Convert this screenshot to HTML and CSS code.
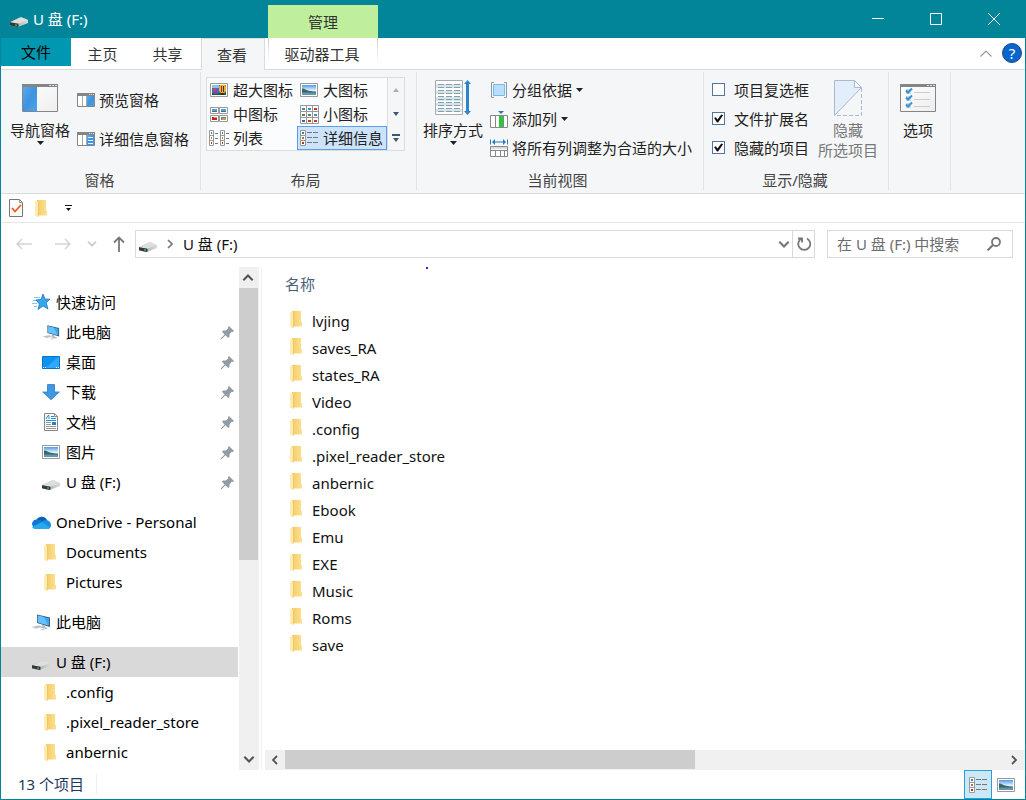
FILE: index.html
```html
<!DOCTYPE html>
<html lang="zh-CN">
<head>
<meta charset="utf-8">
<title>U 盘 (F:)</title>
<link rel="stylesheet" href="styles.css">
</head>
<body>
<svg class="sprite" aria-hidden="true">
  <defs>
    <linearGradient id="g-drive" x1="0" x2="1"><stop offset="0" stop-color="#9b9b9b"/><stop offset="1" stop-color="#d9dadb"/></linearGradient>
    <linearGradient id="g-folder" x1="0" x2="1"><stop offset="0" stop-color="#f0cd6b"/><stop offset="1" stop-color="#ffe08c"/></linearGradient>
    <linearGradient id="g-sky" x1="0" y1="0" x2="0" y2="1"><stop offset="0" stop-color="#4f9bea"/><stop offset=".55" stop-color="#e3f2fb"/><stop offset="1" stop-color="#a9cbe0"/></linearGradient>
    <linearGradient id="g-blue" x1="0" y1="0" x2="1" y2="1"><stop offset="0" stop-color="#58aaf0"/><stop offset=".5" stop-color="#3d93de"/><stop offset="1" stop-color="#4ba4ee"/></linearGradient>
    <linearGradient id="g-page" x1="0" y1="0" x2="1" y2="1"><stop offset="0" stop-color="#fff"/><stop offset="1" stop-color="#eee"/></linearGradient>
  </defs>
  <symbol id="drive" viewBox="0 0 18 10">
    <path d="M0 5.200L10 .6q1-.4 2 0l6 2.400v3L8.500 9.800H6L0 8.200z" fill="url(#g-drive)"/>
    <path d="M0 5.200L10 .6q1-.4 2 0l6 2.400-9.500 3.800z" fill="#dddee0"/>
    <path d="M0 5.200l8.500 1.600v2.700l-1 .4L0 8.200z" fill="#34373a"/>
    <path d="M5 7.200l2 .4v1.400l-2-.4z" fill="#36c13c"/>
  </symbol>
  <symbol id="folder" viewBox="0 0 12 17">
    <path d="M2 0h9v10.500l1 .8v4.200H2z" fill="url(#g-folder)"/>
    <path d="M0 .8L3.500 2v11.500L3 17 0 15.500z" fill="#ffeab0"/>
    <path d="M3.500 2v11.500L3 16.800" stroke="#e6be5c" stroke-width=".7" fill="none"/>
  </symbol>
  <symbol id="photo" viewBox="0 0 18 14">
    <path d="M.5.5h17v13H.5z" fill="#fff" stroke="#999" stroke-width="1"/>
    <path d="M2 2h14v10H2z" fill="url(#g-sky)"/>
    <path d="M2 5.500c3 0 4 2 7 2.200 2.500 0 4 .8 7 .8V10H2z" fill="#39685d"/>
    <path d="M2 9.500h14V12H2z" fill="#6395b5"/>
  </symbol>
  <symbol id="balloon" viewBox="0 0 18 14">
    <path d="M.5.5h17v13H.5z" fill="#fff" stroke="#999"/>
    <path d="M2 2h14v10H2z" fill="#2f74cf"/><path d="M2 2h7v3H2z" fill="#8cc0ef"/>
    <path d="M2 10h14v2H2z" fill="#24582d"/>
    <path d="M10 2h5l1 2v4l-2 2h-3L9 8V4z" fill="#f0b020"/><path d="M11 3h1v6h-1z" fill="#a32a20"/><path d="M13 3h1v6h-1z" fill="#453065"/>
    <path d="M3 5h3v3H3z" fill="#d83b52"/><path d="M4 8h4v3H4z" fill="#7a45b8"/><path d="M11 10h3v2h-3z" fill="#51220c"/>
  </symbol>
  <symbol id="tile-b" viewBox="0 0 9 7" preserveAspectRatio="none"><path d="M.5.5h8v6h-8z" fill="#fff" stroke="#999"/><path d="M2 2h5v2H2z" fill="#4f9fdc"/><path d="M2 4h5v1H2z" fill="#47776c"/></symbol>
  <symbol id="tile-r" viewBox="0 0 9 7" preserveAspectRatio="none"><path d="M.5.5h8v6h-8z" fill="#fff" stroke="#999"/><path d="M2 2h5v3H2z" fill="#c22418"/><path d="M4 2h3v1H4z" fill="#e9a22e"/></symbol>
  <symbol id="tile-y" viewBox="0 0 9 7" preserveAspectRatio="none"><path d="M.5.5h8v6h-8z" fill="#fff" stroke="#999"/><path d="M2 2h5v3H2z" fill="#567eb0"/><path d="M3 3h4v2H3z" fill="#d69831"/></symbol>
  <symbol id="medium" viewBox="0 0 18 15">
    <use href="#tile-b" x="0" y="0" width="9" height="7"/><use href="#tile-b" x="9" y="0" width="9" height="7"/>
    <use href="#tile-r" x="0" y="8" width="9" height="7"/><use href="#tile-y" x="9" y="8" width="9" height="7"/>
  </symbol>
  <symbol id="small" viewBox="0 0 19 19">
    <path d="M.5.5h18v18H.5zM6.500.5v18M12.500.5v18M.5 6.500h18M.5 12.500h18" fill="#fff" stroke="#999"/>
    <path d="M2 3h3v2H2zM8 3h3v2H8zM14 9h3v2h-3z" fill="#3f8fc2"/><path d="M14 3h3v2h-3zM8 15h3v2H8zM14 15h3v2h-3z" fill="#c53a22"/><path d="M2 9h3v2H2zM8 9h3v2H8z" fill="#56844b"/><path d="M2 15h3v2H2z" fill="#3e5fb4"/>
  </symbol>
  <symbol id="list" viewBox="0 0 20 17">
    <path d="M.5.500h4v15h-4zM.5 5.500h4M.5 10.500h4M11.500.500h4v15h-4zM11.500 5.500h4M11.500 10.500h4" fill="#fff" stroke="#999"/>
    <path d="M6 3.500h3M6 8.500h3M6 13.500h3M17 3.500h3M17 8.500h3M17 13.500h3" stroke="#777"/>
    <path d="M2 2h1v2H2zM13 2h1v2h-1z" fill="#3b849c"/><path d="M2 7h1v2H2zM13 7h1v2h-1z" fill="#b38b31"/><path d="M2 12h1v2H2zM13 12h1v2h-1z" fill="#b72c1b"/>
  </symbol>
  <symbol id="details" viewBox="0 0 18 16">
    <path d="M.5.500h5v15h-5zM.5 5.500h5M.5 10.500h5" fill="#fff" stroke="#999"/>
    <path d="M7 2.500h5m1 0h5M7 7.500h5m1 0h5M7 12.500h5m1 0h5" stroke="#777"/>
    <path d="M2 2h2v2H2z" fill="#3b849c"/><path d="M2 7h2v2H2z" fill="#957f54"/><path d="M2 12h2v2H2z" fill="#b72c1b"/>
  </symbol>
  <symbol id="caret" viewBox="0 0 7 4"><path d="M0 0h7L3.500 4z" fill="currentColor"/></symbol>
  <symbol id="pc" viewBox="0 0 20 17">
    <path d="M6 .5l13 3v9.500L6 9z" fill="#3d5c75"/><path d="M6.800 1.600L18 4.200v7.400L6.800 8.400z" fill="#36a8f4"/><path d="M6.800 1.600L13 3l4 8.200-10.200-2.800z" fill="#66c2ff"/>
    <path d="M11 10.800l3 1v1.500l3 .8-2 1-6-1.500 2-.8z" fill="#aeb8bf"/><path d="M0 13l8-1.800 5 1.400L5 15z" fill="#d5dade"/><path d="M2 13l6-1.200 3 .9-6 1.300z" fill="#b7c0c6"/><path d="M9 15.500l3-.7 2 .7-3 1z" fill="#c6cdd2"/>
  </symbol>
  <symbol id="pin" viewBox="0 0 13 13"><path d="M8 0l5 5-1.200 1-1-.2-2.200 2.400L8.400 11l-1.200 1-2.800-2.700L.8 13H0v-.8l3.600-3.700L1 5.800 2 4.600l2.900-.2 2.300-2.200L7 1z" fill="#919ca5"/></symbol>
  <symbol id="down" viewBox="0 0 10 6"><path d="M1 .7l4 4 4-4" fill="none" stroke="currentColor" stroke-width="1.800"/></symbol>
  <symbol id="frame" viewBox="0 0 36 28">
    <path d="M.5.500h35v27H.5z" fill="url(#g-page)" stroke="#858585"/><path d="M0 0h36v3H0z" fill="#858585"/><path d="M27 1h2v1h-2zM30 1h2v1h-2zM33 1h2v1h-2z" fill="#ddd"/>
  </symbol>
</svg>

<div class="window">
  <header class="titlebar">
    <svg class="drive title-drive"><use href="#drive"/></svg>
    <h1 class="title">U 盘 (F:)</h1>
    <div class="context-tab">管理</div>
    <div class="window-buttons">
      <button aria-label="最小化"><svg viewBox="0 0 12 12" width="12" height="12"><path d="M0 5.500h12" stroke="#fff"/></svg></button>
      <button aria-label="最大化"><svg viewBox="0 0 12 12" width="12" height="12"><path d="M.5.500h11v11H.5z" fill="none" stroke="#fff"/></svg></button>
      <button aria-label="关闭"><svg viewBox="0 0 12 12" width="12" height="12"><path d="M0 0l12 12M12 0L0 12" stroke="#fff"/></svg></button>
    </div>
  </header>

  <nav class="tabs">
    <button class="tab file">文件</button>
    <button class="tab">主页</button>
    <button class="tab">共享</button>
    <button class="tab active">查看</button>
    <button class="tab tools">驱动器工具</button>
    <div class="tab-tools">
      <button aria-label="折叠功能区"><svg viewBox="0 0 12 7" width="12" height="7"><path d="M.5 6.500L6 1l5.500 5.500" fill="none" stroke="#999" stroke-width="1.200"/></svg></button>
      <button class="help" aria-label="帮助">?</button>
    </div>
  </nav>

  <section class="ribbon">
    <div class="group panes">
      <div class="group-body">
        <button class="big">
          <span class="big-icon"><svg viewBox="0 0 36 28" width="36" height="28"><use href="#frame" width="36" height="28"/><path d="M1 3h14v24H1z" fill="url(#g-blue)"/></svg></span>
          <span>导航窗格</span><svg class="caret"><use href="#caret"/></svg>
        </button>
        <div class="pane-list">
          <button class="cmd"><svg viewBox="0 0 18 14" width="18" height="14"><path d="M.5.500h17v13H.5z" fill="#fff" stroke="#858585"/><path d="M0 0h18v3H0z" fill="#858585"/><path d="M12 1h1v1h-1zM14 1h1v1h-1zM16 1h1v1h-1z" fill="#ddd"/><path d="M5.500 3v10M9.500 3v10" stroke="#aaa"/><path d="M10 3h7v10h-7z" fill="url(#g-blue)"/></svg>预览窗格</button>
          <button class="cmd"><svg viewBox="0 0 18 14" width="18" height="14"><path d="M.5.500h17v13H.5z" fill="#fff" stroke="#858585"/><path d="M0 0h18v3H0z" fill="#858585"/><path d="M12 1h1v1h-1zM14 1h1v1h-1zM16 1h1v1h-1z" fill="#ddd"/><path d="M5.500 3v10M9.500 3v10" stroke="#aaa"/><path d="M10 3h7v10h-7z" fill="url(#g-blue)"/><path d="M11 5.500h5M11 8.500h5M11 11.500h5" stroke="#e3f3ff"/></svg>详细信息窗格</button>
        </div>
      </div>
      <div class="group-name">窗格</div>
    </div>

    <div class="group layout">
      <div class="group-body">
        <div class="gallery">
          <button><svg viewBox="0 0 18 14" width="18" height="14"><use href="#balloon"/></svg>超大图标</button>
          <button><svg viewBox="0 0 18 14" width="18" height="14"><use href="#photo"/></svg>大图标</button>
          <button><svg viewBox="0 0 18 15" width="18" height="15"><use href="#medium"/></svg>中图标</button>
          <button><svg viewBox="0 0 19 19" width="19" height="19"><use href="#small"/></svg>小图标</button>
          <button><svg viewBox="0 0 20 17" width="20" height="17"><use href="#list"/></svg>列表</button>
          <button class="selected"><svg viewBox="0 0 18 16" width="18" height="16"><use href="#details"/></svg>详细信息</button>
        </div>
        <div class="gallery-scroll">
          <button aria-label="上一行" disabled><svg viewBox="0 0 6 4" width="6" height="4"><path d="M0 4h6L3 0z" fill="#aab0ba"/></svg></button>
          <button aria-label="下一行"><svg viewBox="0 0 6 4" width="6" height="4"><path d="M0 0h6L3 4z" fill="#41536f"/></svg></button>
          <button aria-label="更多"><svg viewBox="0 0 8 8" width="8" height="8"><path d="M0 0h8v2H0zM1 4h6L4 8z" fill="#41536f"/></svg></button>
        </div>
      </div>
      <div class="group-name">布局</div>
    </div>

    <div class="group view">
      <div class="group-body">
        <button class="big">
          <span class="big-icon"><svg viewBox="0 0 36 36" width="36" height="36"><path d="M.5.500h27v34H.5z" fill="#fff" stroke="#aaa"/><path d="M1 4h26v4H1zM1 11h26v3H1zM1 17h26v4H1zM1 23h26v3H1zM1 29h26v3H1z" fill="#cbe8f5"/><path d="M3 4.500h6m2 0h6m2 0h6M3 7.500h6m2 0h6m2 0h6M3 10.500h6m2 0h6m2 0h6M3 13.500h6m2 0h6m2 0h6M3 16.500h6m2 0h6m2 0h6M3 19.500h6m2 0h6m2 0h6M3 22.500h6m2 0h6m2 0h6M3 25.500h6m2 0h6m2 0h6M3 28.500h6m2 0h6m2 0h6M3 31.500h6m2 0h6m2 0h6" stroke="#999"/><path d="M32.500 0L36 4h-2v27h2l-3.500 4-3.500-4h2V4h-2z" fill="#2b86cf"/></svg></span>
          <span>排序方式</span><svg class="caret"><use href="#caret"/></svg>
        </button>
        <div class="cmd-list">
          <button class="cmd"><svg viewBox="0 0 18 18" width="18" height="18"><path d="M4 1.500H1.500v15H4M14 1.500h2.500v15H14" fill="none" stroke="#8c98a3"/><path d="M3.500 3.500h11v11h-11z" fill="#b8dfff" stroke="#7ab8e7"/></svg>分组依据<svg class="caret"><use href="#caret"/></svg></button>
          <button class="cmd"><svg viewBox="0 0 18 18" width="18" height="18"><path d="M.5 5.500h17v12H.5zM5.500 5v12M9.500 5v12M13.500 5v12" fill="#fff" stroke="#888"/><path d="M9 6h4v11H9z" fill="#27c93b"/><path d="M8 1h6l-3 3z" fill="#2b78b8"/></svg>添加列<svg class="caret"><use href="#caret"/></svg></button>
          <button class="cmd"><svg viewBox="0 0 18 18" width="18" height="18"><path d="M.5.500v5M17.500.500v5" stroke="#2b78b8"/><path d="M2 3l3-3v2.500h8V0l3 3-3 3V3.500H5V6z" fill="#2b78b8"/><path d="M.5 7.500h17v10H.5zM5.500 11v6M10.500 11v6M14.500 11v6M0 11.500h18" fill="#fff" stroke="#888"/><path d="M1 8h16v2H1z" fill="#ddd"/></svg>将所有列调整为合适的大小</button>
        </div>
      </div>
      <div class="group-name">当前视图</div>
    </div>

    <div class="group show">
      <div class="group-body">
        <div class="cmd-list">
          <label class="check"><input type="checkbox">项目复选框</label>
          <label class="check"><input type="checkbox" checked>文件扩展名</label>
          <label class="check"><input type="checkbox" checked>隐藏的项目</label>
        </div>
        <button class="big" disabled>
          <span class="big-icon"><svg viewBox="0 0 28 36" width="28" height="36"><path d="M.5 35.500V.500h20l7 7z" fill="#e4eefb" stroke="#a9b9d2"/><path d="M20.500.500v7h7z" fill="#f7faff" stroke="#a9b9d2"/><path d="M27.500 8v27.500H1" fill="none" stroke="#a9b9d2" stroke-dasharray="4 2"/></svg></span>
          <span>隐藏<br>所选项目</span>
        </button>
      </div>
      <div class="group-name">显示/隐藏</div>
    </div>

    <div class="group options">
      <div class="group-body">
        <button class="big">
          <span class="big-icon"><svg viewBox="0 0 36 28" width="36" height="28"><use href="#frame" width="36" height="28"/><path d="M6 5h5v5H6zM6 12h5v5H6zM6 19h5v5H6z" fill="#d4d4d4"/><path d="M14 8.500h16M14 15.500h16M14 22.500h16" stroke="#ccc"/><path d="M6 6.500l2 2 4-4M6 13.500l2 2 4-4M6 20.500l2 2 4-4" fill="none" stroke="#2f93e0" stroke-width="2"/></svg></span>
          <span>选项</span>
        </button>
      </div>
    </div>
  </section>

  <div class="quick-bar">
    <button aria-label="属性"><svg viewBox="0 0 14 18" width="14" height="18"><path d="M.5.500h10l3 3v14H.5z" fill="#fafafa" stroke="#777"/><path d="M10.500.500v3h3" fill="none" stroke="#999"/><path d="M3 9l3 3.500L12 6" fill="none" stroke="#f15a1c" stroke-width="1.800"/></svg></button>
    <button aria-label="新建文件夹"><svg class="folder"><use href="#folder"/></svg></button>
    <button aria-label="自定义快速访问工具栏"><svg viewBox="0 0 7 6" width="7" height="6"><path d="M0 0h7v1H0zM1 3h5L3.500 6z" fill="#111"/></svg></button>
  </div>

  <div class="address-row">
    <div class="history">
      <button aria-label="后退" disabled><svg viewBox="0 0 16 12" width="16" height="12"><path d="M16 6H1M6 1L1 6l5 5" fill="none" stroke="#d4d4d4" stroke-width="1.500"/></svg></button>
      <button aria-label="前进" disabled><svg viewBox="0 0 16 12" width="16" height="12"><path d="M0 6h15M10 1l5 5-5 5" fill="none" stroke="#d4d4d4" stroke-width="1.500"/></svg></button>
      <button class="recent" aria-label="最近位置" disabled><svg class="chev"><use href="#down"/></svg></button>
      <button aria-label="上移"><svg viewBox="0 0 12 16" width="12" height="16"><path d="M6 16V1.500M1 6.500l5-5 5 5" fill="none" stroke="#777" stroke-width="1.800"/></svg></button>
    </div>
    <div class="address">
      <svg class="drive"><use href="#drive"/></svg>
      <svg viewBox="0 0 6 10" width="6" height="10"><path d="M1 1l4 4-4 4" fill="none" stroke="#777" stroke-width="1.600"/></svg>
      <span class="path">U 盘 (F:)</span>
      <button class="drop" aria-label="历史记录"><svg class="chev"><use href="#down"/></svg></button>
      <button class="refresh" aria-label="刷新"><svg viewBox="0 0 14 14" width="14" height="14"><path d="M10 1.500A6 6 0 1 1 4.500 1.500M1 1.500h4v4" fill="none" stroke="#777" stroke-width="1.800"/></svg></button>
    </div>
    <div class="search">
      <input type="text" aria-label="搜索" placeholder="在 U 盘 (F:) 中搜索">
      <button aria-label="开始搜索"><svg viewBox="0 0 14 14" width="14" height="14"><circle cx="9" cy="5" r="4" fill="none" stroke="#777" stroke-width="1.800"/><path d="M6 8L.6 13.400" stroke="#777" stroke-width="2"/></svg></button>
    </div>
  </div>

  <main class="body">
    <nav class="tree">
      <a href="#" class="node"><svg viewBox="0 0 19 16" width="19" height="16"><path d="M2 3.500h6M1 6.500h4M0 9.500h5M2 12.500h3" stroke="#86c6f2"/><path d="M11 0l2 5 5 .2-3.800 3.500L16 15l-5-3-5 3.500L7.400 10 4 6l5-.6z" fill="#35a5ee" stroke="#2076ba" stroke-width=".8"/></svg>快速访问</a>
      <a href="#" class="node sub"><svg viewBox="0 0 20 17" width="18" height="17"><use href="#pc"/></svg>此电脑<svg class="pin"><use href="#pin"/></svg></a>
      <a href="#" class="node sub"><svg viewBox="0 0 18 13" width="18" height="13"><path d="M.5.500h17v12H.5z" fill="#0f93f2" stroke="#0872c3"/><path d="M4 12L16 1h1v11z" fill="#31a8ff"/><path d="M1 11.500h1M3 11.500h1M14 11.500h1M16 11.500h1" stroke="#fff"/></svg>桌面<svg class="pin"><use href="#pin"/></svg></a>
      <a href="#" class="node sub"><svg viewBox="0 0 18 16" width="18" height="16"><path d="M5.500.500h7V8h4.800L9 15.700.7 8h4.800z" fill="#3f98e4" stroke="#2a7cc4" stroke-width=".8"/></svg>下载<svg class="pin"><use href="#pin"/></svg></a>
      <a href="#" class="node sub"><svg viewBox="0 0 18 18" width="18" height="18"><path d="M2.500.500h10l3 3v14h-13z" fill="#fff" stroke="#888"/><path d="M12.500.500v3h3" fill="none" stroke="#888"/><path d="M4 6L6 2.500h1V6M4 7.500h10M9 3.500h3M9 5.500h5" fill="none" stroke="#1f8ce0"/><path d="M10 9h4v3h-4z" fill="#2f7cc0"/><path d="M4 9.500h5M4 11.500h5M4 13.500h10M4 15.500h10" stroke="#999"/></svg>文档<svg class="pin"><use href="#pin"/></svg></a>
      <a href="#" class="node sub"><svg viewBox="0 0 18 14" width="18" height="14"><use href="#photo"/></svg>图片<svg class="pin"><use href="#pin"/></svg></a>
      <a href="#" class="node sub"><svg class="drive"><use href="#drive"/></svg>U 盘 (F:)<svg class="pin"><use href="#pin"/></svg></a>
      <a href="#" class="node top"><svg viewBox="0 0 20 13" width="20" height="13"><path d="M5 5A6 6 0 0 1 16 4l-4 5z" fill="#0a5fb8"/><path d="M2.500 11A4.300 4.300 0 0 1 6 3.600Q9 3 12 6l-6 6z" fill="#0f78d4"/><path d="M11 6q2-2.500 5-2 4 1.500 4 5 0 3-3 4z" fill="#1490df"/><path d="M1 11l10-5 8 5.500q-1 1.500-3 1.500H4q-2 0-3-2z" fill="#29a8ec"/></svg>OneDrive - Personal</a>
      <a href="#" class="node sub"><svg class="folder"><use href="#folder"/></svg>Documents</a>
      <a href="#" class="node sub"><svg class="folder"><use href="#folder"/></svg>Pictures</a>
      <a href="#" class="node top"><svg viewBox="0 0 20 17" width="20" height="17"><use href="#pc"/></svg>此电脑</a>
      <a href="#" class="node top current"><svg class="drive"><use href="#drive"/></svg>U 盘 (F:)</a>
      <a href="#" class="node sub"><svg class="folder"><use href="#folder"/></svg>.config</a>
      <a href="#" class="node sub"><svg class="folder"><use href="#folder"/></svg>.pixel_reader_store</a>
      <a href="#" class="node sub"><svg class="folder"><use href="#folder"/></svg>anbernic</a>
    </nav>
    <div class="vscroll">
      <button class="flip" aria-label="向上滚动"><svg class="chev"><use href="#down"/></svg></button>
      <div class="track"><div class="thumb"></div></div>
      <button aria-label="向下滚动"><svg class="chev"><use href="#down"/></svg></button>
    </div>
    <section class="content">
      <div class="files">
        <i class="marker"></i>
        <table>
          <thead><tr><th scope="col">名称</th></tr></thead>
          <tbody>
            <tr><td><svg class="folder"><use href="#folder"/></svg>lvjing</td></tr>
            <tr><td><svg class="folder"><use href="#folder"/></svg>saves_RA</td></tr>
            <tr><td><svg class="folder"><use href="#folder"/></svg>states_RA</td></tr>
            <tr><td><svg class="folder"><use href="#folder"/></svg>Video</td></tr>
            <tr><td><svg class="folder"><use href="#folder"/></svg>.config</td></tr>
            <tr><td><svg class="folder"><use href="#folder"/></svg>.pixel_reader_store</td></tr>
            <tr><td><svg class="folder"><use href="#folder"/></svg>anbernic</td></tr>
            <tr><td><svg class="folder"><use href="#folder"/></svg>Ebook</td></tr>
            <tr><td><svg class="folder"><use href="#folder"/></svg>Emu</td></tr>
            <tr><td><svg class="folder"><use href="#folder"/></svg>EXE</td></tr>
            <tr><td><svg class="folder"><use href="#folder"/></svg>Music</td></tr>
            <tr><td><svg class="folder"><use href="#folder"/></svg>Roms</td></tr>
            <tr><td><svg class="folder"><use href="#folder"/></svg>save</td></tr>
          </tbody>
        </table>
      </div>
      <div class="hscroll">
        <button aria-label="向左滚动"><svg viewBox="0 0 7 10" width="7" height="10"><path d="M6 1L2 5l4 4" fill="none" stroke="#555" stroke-width="1.800"/></svg></button>
        <div class="track"><div class="thumb"></div></div>
        <button aria-label="向右滚动"><svg viewBox="0 0 7 10" width="7" height="10"><path d="M1 1l4 4-4 4" fill="none" stroke="#555" stroke-width="1.800"/></svg></button>
      </div>
    </section>
  </main>

  <footer class="status">
    <span class="count">13 个项目</span>
    <div class="modes">
      <button class="on" aria-label="详细信息"><svg viewBox="0 0 18 16" width="18" height="16"><use href="#details"/></svg></button>
      <button aria-label="大缩略图"><svg viewBox="0 0 18 14" width="18" height="14"><use href="#photo"/></svg></button>
    </div>
  </footer>
</div>
</body>
</html>
```
FILE: styles.css
```css
* { box-sizing: border-box; }
body {
  margin: 0;
  font: 15px/20px "Noto Sans", "Noto Sans CJK SC", sans-serif;
  color: #111;
  background: #fff;
}
button {
  margin: 0;
  padding: 0;
  border: 0;
  background: none;
  font: inherit;
  color: inherit;
  display: flex;
  align-items: center;
  justify-content: center;
}
svg { flex: none; display: block; }
.sprite { position: absolute; width: 0; height: 0; }
.drive { width: 18px; height: 10px; }
.folder { width: 12px; height: 17px; }
.caret { width: 7px; height: 4px; }
.chev { width: 12px; height: 7px; }

.window {
  min-height: 100vh;
  display: flex;
  flex-direction: column;
  border: 1px solid #028599;
  border-top: 0;
}

.titlebar {
  height: 38px;
  display: flex;
  align-items: center;
  background: #028599;
  color: #fff;
  padding-left: 9px;
}
.title-drive { margin-top: 6px; }
.title { margin: 0 0 0 5px; width: 235px; font-size: 15px; font-weight: 400; }
.context-tab {
  width: 110px;
  height: 33px;
  align-self: flex-end;
  background: #bfef9d;
  color: #333;
  text-align: center;
  line-height: 34px;
}
.window-buttons { margin-left: auto; padding-right: 2px; display: flex; }
.window-buttons button { width: 58px; height: 38px; }

.tabs {
  height: 32px;
  display: flex;
  align-items: flex-start;
  border-bottom: 1px solid #dadbdc;
  color: #333;
}
.tab { height: 31px; width: 65px; padding-right: 2px; }
.tab.file { width: 70px; height: 28px; padding: 0; background: #0097b1; color: #000; }
.tab.active {
  width: 64px;
  height: 32px;
  background: #f5f6f7;
  border: 1px solid #dadbdc;
  border-bottom: 0;
}
.tab.tools {
  width: 110px;
  margin-left: 3px;
  border: 1px solid;
  border-width: 0 1px;
  border-image: linear-gradient(#ccc, #fff 80%) 1;
}
.tab-tools { margin-left: auto; display: flex; align-items: center; gap: 10px; height: 30px; padding-right: 3px; }
.help {
  width: 20px;
  height: 20px;
  border: 1px solid #174a86;
  border-radius: 50%;
  background: #0a66cc;
  color: #fff;
}

.ribbon {
  display: flex;
  background: #f5f6f7;
  border-bottom: 1px solid #dadbdc;
  color: #222;
  padding: 2px 0 3px;
}
.group {
  display: flex;
  flex-direction: column;
  border-right: 1px solid #e2e3e4;
  height: 118px;
  white-space: nowrap;
}
.group-body { display: flex; flex: 1; }
.group-name { height: 20px; text-align: center; color: #444; }
.big { flex-direction: column; justify-content: flex-start; padding-top: 3px; }
.big-icon { height: 45px; display: flex; align-items: center; }
.big .caret { margin-top: 1px; }
.big:disabled { color: #777; }
.cmd { gap: 4px; height: 29px; }
.cmd-list { display: flex; flex-direction: column; align-items: flex-start; padding-top: 3px; }
.panes { padding: 0 11px 0 9px; }
.panes .group-body { gap: 7px; }
.pane-list { display: flex; flex-direction: column; align-items: flex-start; gap: 10px; padding-top: 13px; }
.layout { padding: 0 11px 0 5px; }
.gallery {
  display: grid;
  grid-template-columns: 90px 90px;
  grid-auto-rows: 24px;
  height: 74px;
  margin-top: 5px;
  background: #fbfcfd;
  border: 1px solid #dcdddf;
}
.gallery button { display: grid; grid-template-columns: 20px auto; gap: 4px; padding-left: 2px; justify-content: start; justify-items: center; }
.gallery .selected { background: #cce3fb; border: 1px solid #5d9fe6; padding-left: 1px; }
.gallery-scroll { margin: 5px 0; width: 17px; height: 74px; display: grid; grid-template-rows: repeat(3, 1fr); border: 1px solid #dcdddf; border-left: 0; }
.view { padding: 0 11px 0 6px; }
.view .group-body { gap: 7px; }
.show { padding: 0 10px 0 8px; }
.show .group-body { gap: 9px; }
.check { display: flex; align-items: center; gap: 9px; height: 29px; }
.check input {
  appearance: none;
  width: 13px;
  height: 13px;
  margin: 0;
  border: 1px solid #5772a5;
  background: #fff;
  display: grid;
  place-items: center;
}
.check input:checked::before {
  content: "";
  width: 9px;
  height: 9px;
  background: #111;
  clip-path: polygon(0 45%, 20% 35%, 38% 62%, 80% 5%, 100% 15%, 45% 95%, 32% 95%);
}
.options { padding: 0 14px 0 11px; }

.quick-bar { height: 29px; display: flex; align-items: center; padding-left: 8px; gap: 12px; border-bottom: 1px solid #e6e6e6; }
.quick-bar button:last-child { margin-left: 6px; }

.address-row { display: flex; align-items: center; height: 44px; padding: 0 12px 2px 15px; }
.history { display: flex; align-items: center; width: 119px; gap: 23px; }
.history .recent { color: #ccc; margin: 0 -7px; }
.recent .chev { width: 10px; height: 6px; }
.address { flex: 1; display: flex; align-items: center; height: 28px; border: 1px solid #d9d9d9; padding-left: 3px; gap: 10px; }
.address .drive { margin-top: 6px; }
.drop { margin-left: auto; color: #777; margin-right: -8px; }
.refresh { width: 22px; height: 26px; border-left: 1px solid #d9d9d9; }
.search { width: 186px; height: 28px; margin-left: 12px; border: 1px solid #d9d9d9; display: flex; align-items: center; padding: 0 11px 0 9px; }
.search input { flex: 1; min-width: 0; border: 0; padding: 0; outline: 0; font: inherit; background: none; }
.search input::placeholder { color: #6d6d6d; opacity: 1; }

.body { flex: 1; display: flex; }
.tree { width: 237px; padding-top: 20px; color: #000; }
.node { display: flex; align-items: center; height: 30px; gap: 5px; padding: 0 4px 0 31px; color: inherit; text-decoration: none; }
.node.sub { padding-left: 41px; gap: 6px; }
.node.top { margin-top: 10px; padding-left: 30px; gap: 5px; }
.node.top.current { padding-left: 31px; gap: 6px; }
.node > .folder:first-child { margin: 0 4px 0 2px; }
.node .drive { margin-top: 6px; }
.node.current { background: #d9d9d9; }
.node .pin { width: 13px; height: 13px; margin-left: auto; }
.vscroll { width: 20px; margin-left: 1px; background: #f0f0f0; display: flex; flex-direction: column; color: #555; }
.vscroll button { height: 21px; width: 19px; }
.flip { transform: rotate(180deg); }
.vscroll .track { flex: 1; }
.vscroll .thumb { height: 59%; width: 19px; background: #cdcdcd; }
.content { flex: 1; display: flex; flex-direction: column; margin-left: 2px; border-left: 1px solid #f0f0f0; }
.files { flex: 1; position: relative; padding: 0 0 0 23px; }
.marker { position: absolute; left: 164px; top: 0; width: 2px; height: 2px; background: #22f; }
table { border-collapse: collapse; }
th { height: 40px; padding: 0 0 6px; text-align: left; vertical-align: middle; font-weight: 400; color: #4c607a; }
td { display: flex; align-items: center; height: 27px; padding: 0 0 0 5px; gap: 10px; }
td .folder { margin-top: -3px; }
.hscroll { height: 20px; display: flex; background: #f0f0f0; margin-left: 3px; }
.hscroll button { width: 20px; padding-right: 2px; }
.hscroll .track { flex: 1; }
.hscroll .thumb { width: 57%; height: 19px; background: #cdcdcd; }

.status { height: 29px; display: flex; align-items: center; justify-content: space-between; padding: 0 0 2px 17px; color: #1e395b; }
.count { padding-right: 12px; border-right: 1px solid #f0f0f0; }
.modes { display: flex; padding-right: 5px; margin-bottom: -2px; }
.modes button { width: 28px; height: 29px; }
.modes .on { background: #cce8f6; border: 1px solid #26a0da; }
```
